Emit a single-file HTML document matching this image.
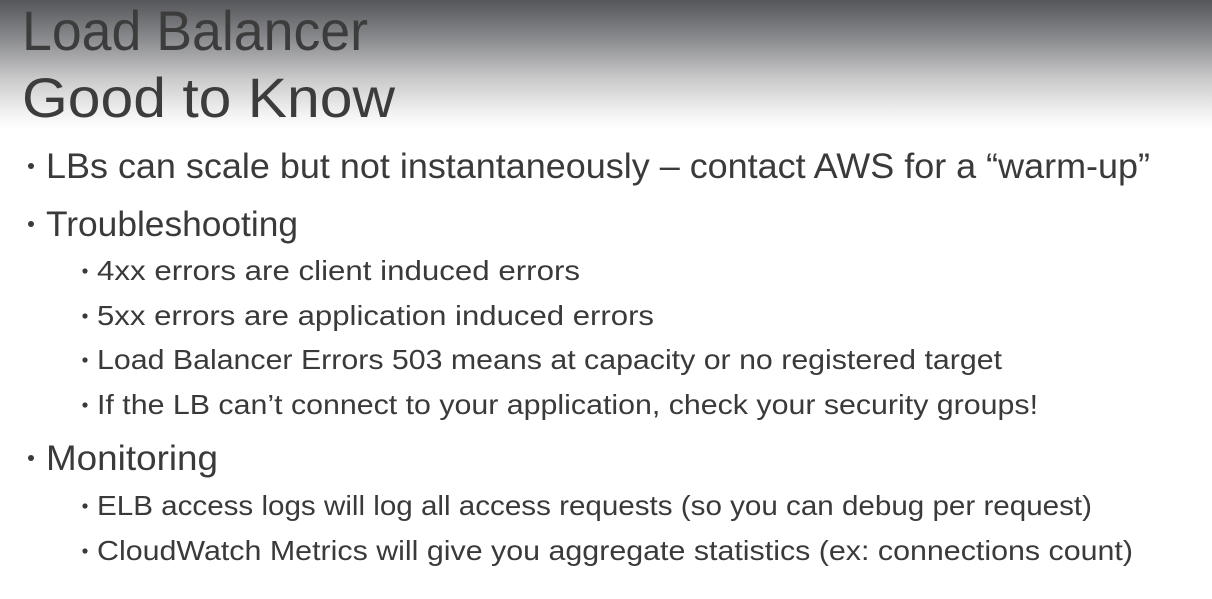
<!DOCTYPE html>
<html><head><style>
html,body{margin:0;padding:0;width:1212px;height:599px;overflow:hidden;background:#fff}
.bg{position:absolute;left:0;top:0;width:1212px;height:130px;background:linear-gradient(#55565a 0%,#8a8b8e 30%,#c9c9ca 60%,#f3f3f3 88%,#fff 100%)}
svg{position:absolute;left:0;top:0}
text{font-family:"Liberation Sans",sans-serif;fill:#3a3a3a}
circle{fill:#3a3a3a}
</style></head><body>
<div class="bg"></div>
<svg width="1212" height="599">
<text x="22" y="50" font-size="56" textLength="346" lengthAdjust="spacingAndGlyphs" style="fill:#3c3c3c">Load Balancer</text>
<text x="22" y="117" font-size="56" textLength="373" lengthAdjust="spacingAndGlyphs" style="fill:#3c3c3c">Good to Know</text>
<circle cx="31" cy="166" r="3"/>
<text x="46" y="178" font-size="35" textLength="1104" lengthAdjust="spacingAndGlyphs">LBs can scale but not instantaneously – contact AWS for a “warm-up”</text>
<circle cx="31" cy="224" r="3"/>
<text x="46" y="236" font-size="35" textLength="252" lengthAdjust="spacingAndGlyphs">Troubleshooting</text>
<circle cx="85" cy="271" r="2.6"/>
<text x="97" y="280" font-size="28" textLength="483" lengthAdjust="spacingAndGlyphs">4xx errors are client induced errors</text>
<circle cx="85" cy="316" r="2.6"/>
<text x="97" y="325" font-size="28" textLength="557" lengthAdjust="spacingAndGlyphs">5xx errors are application induced errors</text>
<circle cx="85" cy="360" r="2.6"/>
<text x="97" y="369" font-size="28" textLength="905" lengthAdjust="spacingAndGlyphs">Load Balancer Errors 503 means at capacity or no registered target</text>
<circle cx="85" cy="405" r="2.6"/>
<text x="97" y="414" font-size="28" textLength="941" lengthAdjust="spacingAndGlyphs">If the LB can’t connect to your application, check your security groups!</text>
<circle cx="31" cy="458" r="3"/>
<text x="46" y="470" font-size="35" textLength="172" lengthAdjust="spacingAndGlyphs">Monitoring</text>
<circle cx="85" cy="506" r="2.6"/>
<text x="97" y="515" font-size="28" textLength="995" lengthAdjust="spacingAndGlyphs">ELB access logs will log all access requests (so you can debug per request)</text>
<circle cx="85" cy="551" r="2.6"/>
<text x="97" y="560" font-size="28" textLength="1036" lengthAdjust="spacingAndGlyphs">CloudWatch Metrics will give you aggregate statistics (ex: connections count)</text>
</svg>
</body></html>
